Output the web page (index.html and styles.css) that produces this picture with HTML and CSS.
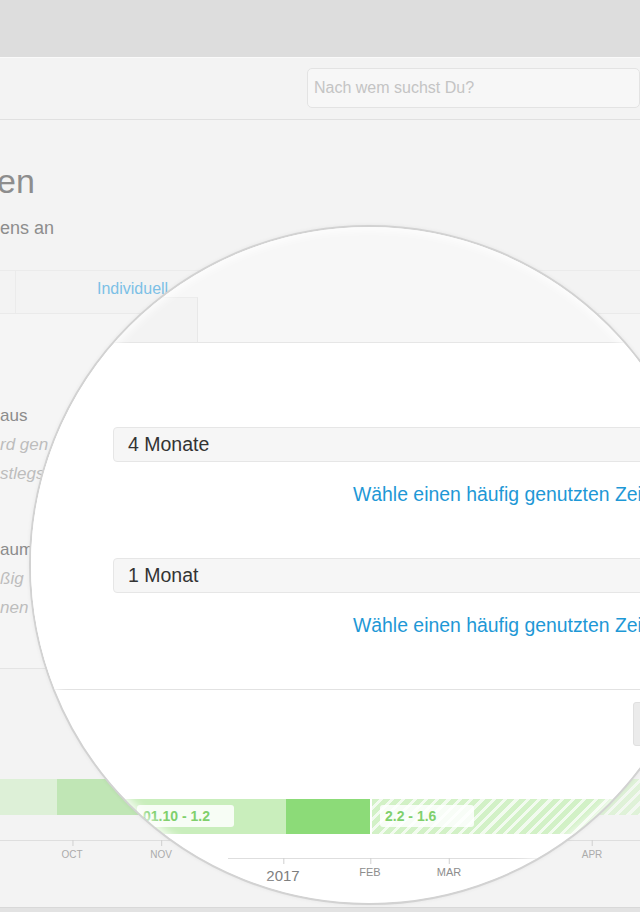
FILE: index.html
```html
<!DOCTYPE html>
<html lang="de">

<head>
    <meta charset="UTF-8">
    <meta name="viewport" content="width=device-width, initial-scale=1.0">
    <title>Zeiträume festlegen</title>
    <link rel="stylesheet" href="styles.css">
</head>

<body>

    <!-- Page behind the lens -->
    <div class="page">
        <div class="chrome"></div>

        <header class="topbar">
            <input class="search" type="text" placeholder="Nach wem suchst Du?">
        </header>

        <div class="intro">
            <h1 class="title">en</h1>
            <p class="lead">ens an</p>
        </div>

        <div class="tabs">
            <div class="tab tab-first"></div>
            <div class="tab tab-active"><a href="#">Individuell</a></div>
        </div>

        <div class="panel">
            <div class="field-label">
                <span class="name">aus</span>
                <span class="hint">rd gen</span>
                <span class="hint">stlegs</span>
            </div>
            <div class="field-label">
                <span class="name">aum</span>
                <span class="hint">ßig</span>
                <span class="hint">nen</span>
            </div>
        </div>

        <div class="chart">
            <div class="bar">
                <span class="seg seg-pale" style="width:57px"></span>
                <span class="seg seg-light" style="width:233px"></span>
                <span class="seg seg-strong" style="width:82px"></span>
                <span class="seg seg-hatch seg-faded" style="width:268px"></span>
            </div>
            <div class="axis">
                <span class="tick" style="left:72px">OCT</span>
                <span class="tick" style="left:161px">NOV</span>
                <span class="tick" style="left:592px">APR</span>
            </div>
        </div>

        <div class="footer-band"></div>
    </div>

    <!-- Magnifier -->
    <div class="lens">
        <div class="lens-inner">
            <div class="lens-tabs">
                <div class="lens-tab"></div>
            </div>

            <div class="lens-form">
                <div class="lens-input">4 Monate</div>
                <a class="preset" href="#">Wähle einen häufig genutzten Zeitraum</a>
                <div class="lens-input lens-input-second">1 Monat</div>
                <a class="preset" href="#">Wähle einen häufig genutzten Zeitraum</a>
            </div>

            <div class="lens-actions">
                <div class="btn-edge"></div>
            </div>

            <div class="bar lens-bar">
                <span class="seg seg-soft" style="width:286px">
                    <span class="bar-label" style="left:137px;width:91px">01.10 - 1.2</span>
                </span>
                <span class="seg seg-strong" style="width:84px"></span>
                <span class="seg seg-gap" style="width:2px"></span>
                <span class="seg seg-hatch" style="width:368px">
                    <span class="bar-label label-tight" style="left:8px;width:89px">2.2 - 1.6</span>
                </span>
            </div>

            <div class="axis lens-axis">
                <span class="tick tick-year" style="left:55px">2017</span>
                <span class="tick tick-month" style="left:142px">FEB</span>
                <span class="tick tick-month" style="left:221px">MAR</span>
            </div>
        </div>
    </div>

</body>

</html>
```

FILE: styles.css
```css
html,
body {
    overflow: hidden;
}

body {
    margin: 0;
    width: 640px;
    height: 912px;
    position: relative;
    background-color: #f3f3f3;
    font-family: "Liberation Sans", Arial, sans-serif;
}

/* Browser chrome + header */
.chrome {
    height: 57px;
    background-color: #dddddd;
}

.topbar {
    height: 61px;
    border-top: 1px solid #fafafa;
    border-bottom: 1px solid #e0e0e0;
    padding-left: 307px;
    display: flex;
    align-items: flex-start;
}

.search {
    margin-top: 10px;
    width: 360px;
    height: 40px;
    box-sizing: border-box;
    border: 1px solid #e3e3e3;
    border-radius: 5px;
    background-color: #f7f7f7;
    padding: 0 6px;
    font-family: "Liberation Sans", Arial, sans-serif;
    font-size: 16px;
    color: #c4c4c4;
    outline: none;
}

.search::placeholder {
    color: #c4c4c4;
}

/* Title */
.intro {
    padding-top: 41px;
}

.title {
    margin: 0 0 0 -3px;
    font-size: 34px;
    line-height: 40px;
    font-weight: normal;
    color: #8d8d8d;
}

.lead {
    margin: 15px 0 0;
    font-size: 18px;
    line-height: 24px;
    color: #8d8d8d;
}

/* Tabs */
.tabs {
    margin-top: 30px;
    height: 42px;
    display: flex;
    border-top: 1px solid #ebebeb;
}

.tab {
    border-right: 1px solid #ebebeb;
}

.tab-first {
    width: 15px;
}

.tab-active {
    width: 101px;
    padding: 8px 0 0 81px;
    font-size: 16px;
    line-height: 20px;
}

.tab-active a {
    color: #7cc0e6;
    text-decoration: none;
}

/* Form labels behind the lens */
.panel {
    height: 356px;
    box-sizing: border-box;
    padding-top: 87px;
    border-top: 1px solid #eaeaea;
    border-bottom: 1px solid #e4e4e4;
    background-color: #f5f5f5;
}

.field-label {
    display: flex;
    flex-direction: column;
    font-size: 17px;
    line-height: 29px;
}

.field-label + .field-label {
    margin-top: 47px;
}

.name {
    color: #8c8c8c;
}

.hint {
    font-style: italic;
    color: #bdbdbd;
}

/* Timeline */
.chart {
    padding-top: 110px;
}

.bar {
    display: flex;
    height: 36px;
}

.seg {
    position: relative;
    flex: none;
    height: 100%;
}

.seg-pale {
    background-color: #ddf0d7;
}

.seg-light {
    background-color: #c0e6b5;
}

.seg-soft {
    background-color: #c9eebc;
}

.seg-strong {
    background-color: #8cdb78;
}

.seg-gap {
    background-color: #ffffff;
}

.seg-hatch {
    background: repeating-linear-gradient(135deg, #d2f1c6 0 5px, #f2fbef 5px 8px);
}

.seg-faded {
    opacity: 0.6;
}

.bar-label {
    position: absolute;
    top: 6px;
    height: 22px;
    padding-left: 6px;
    border-radius: 3px;
    background-color: rgba(255, 255, 255, 0.85);
    font-size: 14px;
    font-weight: bold;
    line-height: 22px;
    color: #80d06c;
    white-space: nowrap;
}

.label-tight {
    padding-left: 5px;
}

.axis {
    position: relative;
    margin-top: 25px;
    height: 66px;
    border-top: 1px solid #dedede;
}

.tick {
    position: absolute;
    top: 0;
    transform: translateX(-50%);
    padding-top: 8px;
    font-size: 10px;
    line-height: 12px;
    color: #ababab;
}

.tick::before {
    content: "";
    position: absolute;
    left: 50%;
    top: -1px;
    height: 6px;
    border-left: 1px solid #d0d0d0;
}

.footer-band {
    height: 4px;
    border-top: 1px solid #d8d8d8;
    background-color: #e2e2e2;
}

/* Lens */
.lens {
    position: absolute;
    left: 29px;
    top: 225px;
    width: 680px;
    height: 680px;
    box-sizing: border-box;
    border: 2px solid #d2d2d2;
    border-radius: 50%;
    overflow: hidden;
    background-color: #ffffff;
    box-shadow: 0 0 4px rgba(0, 0, 0, 0.06);
}

.lens::after {
    content: "";
    position: absolute;
    inset: 0;
    border-radius: 50%;
    box-shadow: inset 0 0 10px 3px rgba(255, 255, 255, 0.85);
    pointer-events: none;
}

.lens-inner {
    position: absolute;
    left: -31px;
    top: -227px;
    width: 740px;
}

.lens-tabs {
    height: 342px;
    display: flex;
    align-items: flex-end;
    background-color: #f7f7f7;
}

.lens-tab {
    margin-left: 15px;
    width: 182px;
    height: 44px;
    border-top: 1px solid #ececec;
    border-right: 1px solid #e8e8e8;
    background-color: #f3f3f3;
}

.lens-form {
    padding: 84px 0 53px;
    border-top: 1px solid #e6e6e6;
    border-bottom: 1px solid #e2e2e2;
    background-color: #ffffff;
}

.lens-input {
    margin-left: 113px;
    height: 35px;
    box-sizing: border-box;
    border: 1px solid #e6e6e6;
    border-radius: 4px;
    background-color: #f6f6f6;
    padding-left: 14px;
    font-size: 19.5px;
    line-height: 33px;
    color: #333333;
}

.lens-input-second {
    margin-top: 53px;
}

.preset {
    display: block;
    margin: 21px 0 0 353px;
    font-size: 19.4px;
    line-height: 22px;
    color: #1e98d6;
    text-decoration: none;
    white-space: nowrap;
}

.lens-actions {
    height: 109px;
    box-sizing: border-box;
    padding-top: 12px;
}

.btn-edge {
    margin-left: 633px;
    width: 40px;
    height: 44px;
    box-sizing: border-box;
    border: 1px solid #e0e0e0;
    border-radius: 3px;
    background-color: #ebebeb;
}

.lens-bar {
    height: 35px;
}

.lens-axis {
    margin: 24px 0 0 228px;
}

.tick-month {
    padding-top: 7px;
    font-size: 11px;
    line-height: 13px;
    color: #8d8d8d;
}

.tick-year {
    padding-top: 8px;
    font-size: 15px;
    line-height: 18px;
    color: #7d7d7d;
}
```
